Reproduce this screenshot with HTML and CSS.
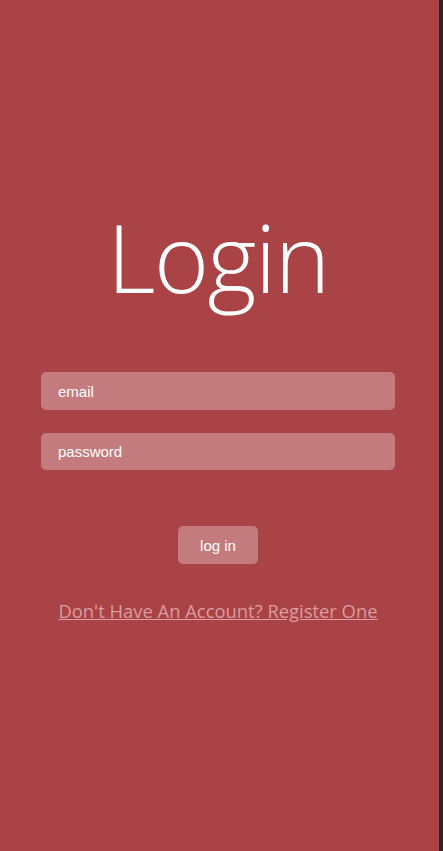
FILE: index.html
```html
<!DOCTYPE html>
<html>
<head>
<meta charset="utf-8">
<link rel="stylesheet" href="styles.css">
</head>
<body>
<main class="page">
  <h1 class="title">Login</h1>
  <form class="form">
    <input class="field" type="text" placeholder="email">
    <input class="field" type="password" placeholder="password">
    <button class="btn" type="button">log in</button>
  </form>
  <a class="link" href="#">Don't Have An Account? Register One</a>
</main>
<div class="edge"></div>
</body>
</html>
```
FILE: styles.css
```css
html, body {
  margin: 0;
  padding: 0;
  height: 100%;
}
body {
  display: flex;
  background: #a94346;
  font-family: "Liberation Sans", Arial, sans-serif;
}
.page {
  flex: 1;
  display: flex;
  flex-direction: column;
  align-items: center;
  padding-top: 197px;
  padding-right: 3px;
}
.edge {
  width: 4px;
  background: #25272a;
}
.title {
  margin: 0;
  font-family: "Open Sans", sans-serif;
  font-weight: 300;
  font-size: 94px;
  line-height: 120px;
  color: #ffffff;
  letter-spacing: -1.5px;
}
.form {
  margin-top: 55px;
  display: flex;
  flex-direction: column;
  align-items: center;
  width: 354px;
}
.field {
  box-sizing: border-box;
  width: 354px;
  height: 38px;
  border: none;
  border-radius: 5px;
  background: rgba(255,255,255,0.3);
  padding: 0 17px;
  font-family: "Liberation Sans", Arial, sans-serif;
  font-size: 15px;
  color: #fff;
  outline: none;
}
.field + .field {
  margin-top: 23px;
  height: 37px;
}
.field::placeholder {
  color: #ffffff;
  opacity: 1;
}
.btn {
  margin-top: 56px;
  width: 80px;
  height: 38px;
  border: none;
  border-radius: 5px;
  background: rgba(255,255,255,0.3);
  color: #fff;
  font-family: "Liberation Sans", Arial, sans-serif;
  font-size: 15px;
}
.link {
  margin-top: 34px;
  font-family: "Open Sans", sans-serif;
  font-size: 18.4px;
  color: #dd9c9e;
  text-decoration: underline;
}
```
